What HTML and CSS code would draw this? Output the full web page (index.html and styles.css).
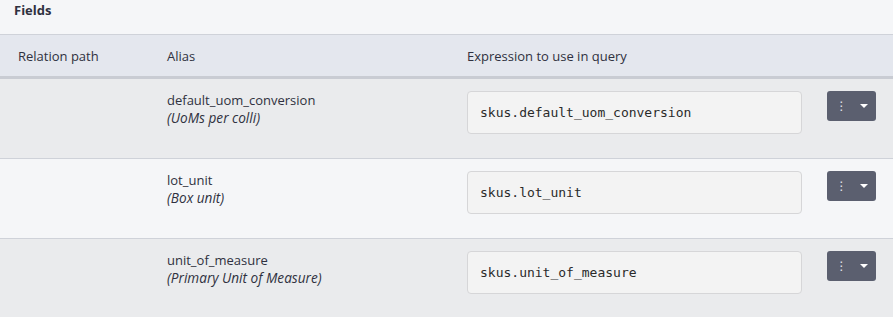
FILE: index.html
```html
<!DOCTYPE html>
<html lang="en">
<head>
  <meta charset="UTF-8" />
  <title>Fields</title>
  <link rel="stylesheet" href="styles.css">
</head>
<body>
  <div class="panel-title">Fields</div>
  <table class="fields">
    <thead>
      <tr>
        <th class="col-path">Relation path</th>
        <th class="col-alias">Alias</th>
        <th class="col-expr">Expression to use in query</th>
        <th class="col-actions"></th>
      </tr>
    </thead>
    <tbody>
      <tr class="odd">
        <td></td>
        <td class="alias">default_uom_conversion<br><em>(UoMs per colli)</em></td>
        <td><div class="expr">skus.default_uom_conversion</div></td>
        <td><button class="menu-btn"><span class="dots">&#8942;</span><span class="caret"></span></button></td>
      </tr>
      <tr class="even">
        <td></td>
        <td class="alias">lot_unit<br><em>(Box unit)</em></td>
        <td><div class="expr">skus.lot_unit</div></td>
        <td><button class="menu-btn"><span class="dots">&#8942;</span><span class="caret"></span></button></td>
      </tr>
      <tr class="odd">
        <td></td>
        <td class="alias">unit_of_measure<br><em>(Primary Unit of Measure)</em></td>
        <td><div class="expr">skus.unit_of_measure</div></td>
        <td><button class="menu-btn"><span class="dots">&#8942;</span><span class="caret"></span></button></td>
      </tr>
    </tbody>
  </table>
</body>
</html>
```
FILE: styles.css
```css
body {
  margin: 0;
  font-family: 'Open Sans', sans-serif;
  font-size: 13px;
  color: #2f3140;
  background: #f5f6f8;
}
.panel-title {
  height: 35px;
  padding: 1px 14px 0;
  box-sizing: border-box;
  font-weight: bold;
  font-size: 13px;
  border-bottom: 1px solid #cfd2d9;
}
.fields {
  width: 100%;
  border-collapse: collapse;
}
th {
  background: #e4e7ee;
  height: 41px;
  font-weight: normal;
  text-align: left;
  padding: 0;
  border-bottom: 3px solid #c9ccd3;
}
.col-path { width: 167px; padding-left: 18px; box-sizing: border-box; }
.col-alias { width: 300px; }
.col-expr { width: 360px; }
td {
  vertical-align: top;
  padding: 12px 0 0;
  height: 67px;
  border-bottom: 1px solid #cfd2d9;
}
tr:last-child td { border-bottom: none; }
tr.odd td { background: #eaebed; }
tr.even td { background: #f5f6f8; }
td.alias {
  padding-top: 13px;
  height: 66px;
  line-height: 17px;
}
td.alias em {
  font-size: 13.6px;
}
.expr {
  width: 335px;
  height: 43px;
  box-sizing: border-box;
  background: #f3f3f3;
  border: 1px solid #d6d6d8;
  border-radius: 4px;
  padding: 0 12px;
  display: flex;
  align-items: center;
  font-family: 'DejaVu Sans Mono', monospace;
  font-size: 13px;
  color: #2a2a2a;
}
.menu-btn {
  width: 49px;
  height: 30px;
  background: #5b5f6f;
  border: none;
  border-radius: 3px;
  display: flex;
  align-items: center;
  justify-content: center;
  gap: 12px;
  padding: 0;
  color: #e8e8ee;
}
.dots {
  font-size: 12px;
  font-family: 'DejaVu Sans', sans-serif;
  line-height: 1;
}
.caret {
  width: 0;
  height: 0;
  border-left: 4px solid transparent;
  border-right: 4px solid transparent;
  border-top: 4px solid #ffffff;
}
```
